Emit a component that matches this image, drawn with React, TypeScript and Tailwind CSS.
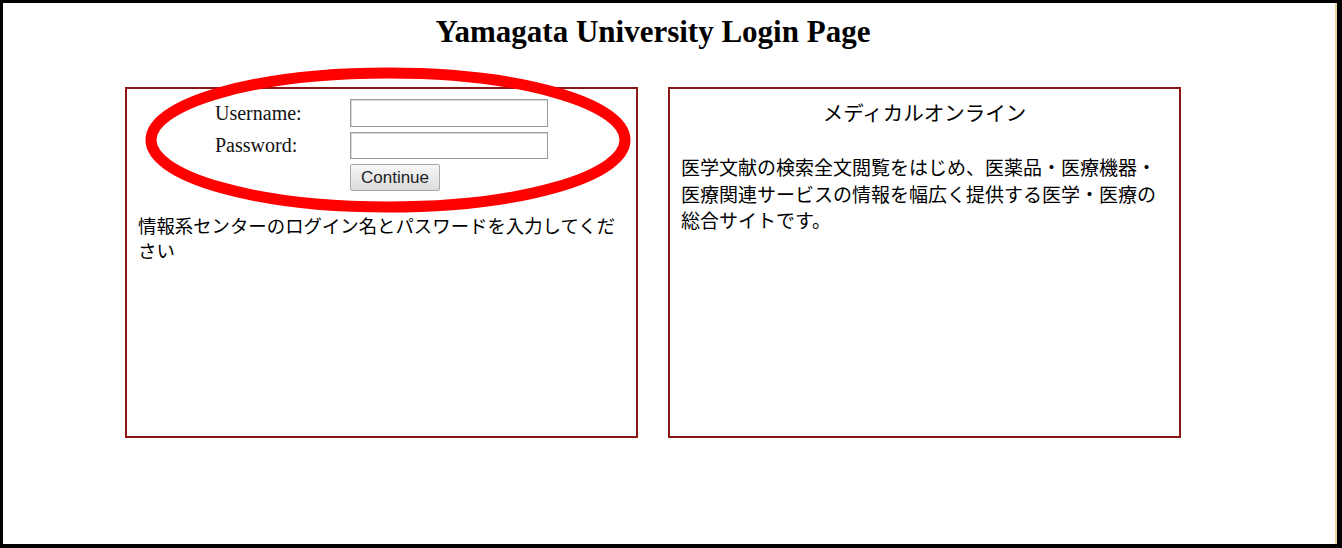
import React from 'react';

const serif = { fontFamily: '"Liberation Serif", "Times New Roman", serif' };
const jp = { fontFamily: '"Liberation Sans", "Noto Sans CJK JP", sans-serif' };

export default function App() {
  return (
    <div className="relative h-[548px] w-full overflow-hidden border-t-[3px] border-l-[3px] border-b-[4px] border-r-[5px] border-black bg-white">
      <div className="h-full border-r-2 border-[#e4d89c]">
        <div className="ml-[122px] w-[1056px] pt-[11px]">
          <h1 className="text-center text-[31px] font-bold leading-[36px] text-black" style={serif}>
            Yamagata University Login Page
          </h1>

          <div className="mt-[37px] flex gap-[30px]">
            {/* login panel */}
            <div className="h-[351px] w-[513px] border-2 border-[#8b1616] px-[11px] pt-[10px]">
              <form onSubmit={(e) => e.preventDefault()} className="mx-auto grid w-[333px] grid-cols-[135px_198px] gap-y-[5px]">
                <label htmlFor="username" className="flex h-[28px] items-center text-[20px] leading-[28px] text-[#111]" style={serif}>
                  Username:
                </label>
                <input
                  id="username"
                  type="text"
                  className="h-[28px] w-[198px] border border-[#9a9a9a] bg-white shadow-[inset_1px_1px_0_#d8d8d8]"
                />
                <label htmlFor="password" className="flex h-[27px] items-center text-[20px] leading-[27px] text-[#111]" style={serif}>
                  Password:
                </label>
                <input
                  id="password"
                  type="password"
                  className="h-[27px] w-[198px] border border-[#9a9a9a] bg-white shadow-[inset_1px_1px_0_#d8d8d8]"
                />
                <div className="h-[27px]" />
                <button
                  type="submit"
                  className="h-[27px] w-[90px] rounded-[2px] border border-[#a8a8a8] bg-gradient-to-b from-[#f7f7f7] to-[#dcdcdc] text-[17px] leading-none text-[#222]"
                  style={{ fontFamily: '"Liberation Sans", Arial, sans-serif' }}
                >
                  Continue
                </button>
              </form>
              <p className="mt-[23px] text-[18.4px] leading-[25px] text-black" style={jp}>
                情報系センターのログイン名とパスワードを入力してください
              </p>
            </div>

            {/* info panel */}
            <div className="h-[351px] w-[513px] border-2 border-[#8b1616] px-[11px] pt-[13px]">
              <h2 className="text-center text-[20.5px] leading-[24px] text-black" style={jp}>
                メディカルオンライン
              </h2>
              <p className="mt-[30px] text-[19px] leading-[26.5px] text-black" style={jp}>
                医学文献の検索全文閲覧をはじめ、医薬品・医療機器・医療関連サービスの情報を幅広く提供する医学・医療の総合サイトです。
              </p>
            </div>
          </div>
        </div>
      </div>

      {/* red annotation ring */}
      <svg className="pointer-events-none absolute left-[137px] top-[59px]" width="500" height="162" viewBox="0 0 500 162">
        <ellipse cx="248" cy="78" rx="237" ry="67" fill="none" stroke="#ff0000" strokeWidth="11" />
      </svg>
    </div>
  );
}
